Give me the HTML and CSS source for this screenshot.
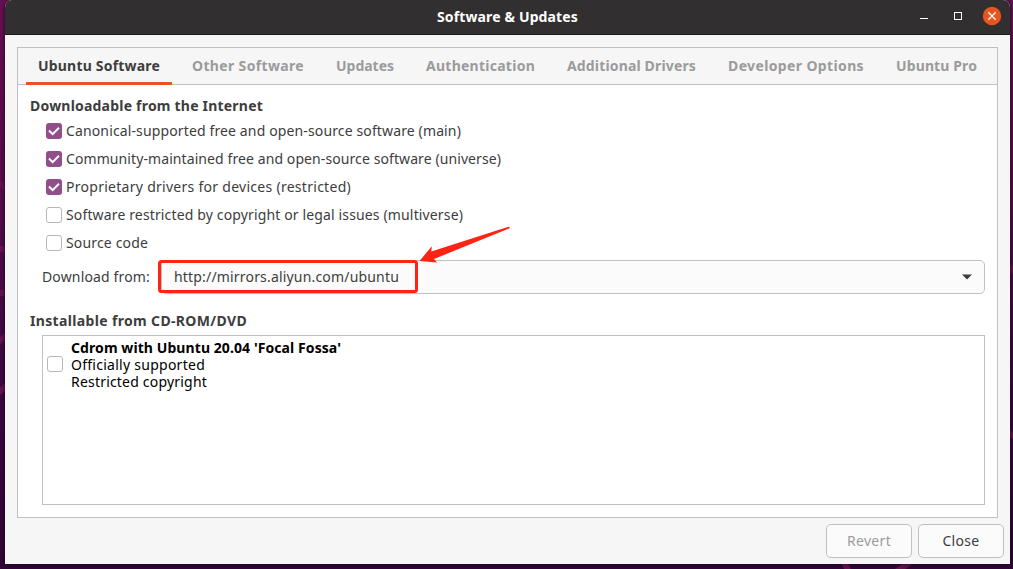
FILE: index.html
```
<!DOCTYPE html>
<html lang="en">
<head>
<meta charset="utf-8">
<title>Software &amp; Updates</title>
<link rel="stylesheet" href="styles.css">
</head>
<body>
<div class="desktop">
  <svg class="wallpaper" width="1013" height="569" viewBox="0 0 1013 569" fill="none" stroke="#641250" stroke-width="6">
    <path d="M-2 182 L6 188 M-2 249 H6 M-2 293 H6 M-2 342 L7 335 M-2 393 L6 386 M1007 265 L1015 272 M1007 432 L1015 437 M844 562 L850 574 M910 562 L896 572"/>
  </svg>
  <main class="window">
    <header class="titlebar">
      <h1 class="title">Software &amp; Updates</h1>
      <div class="controls">
        <svg width="90" height="34" viewBox="0 0 90 34">
          <path d="M0 18.500h8" stroke="#fff"/>
          <rect x="34.500" y="12.500" width="7" height="7" fill="none" stroke="#fff"/>
          <circle cx="72" cy="16" r="9.2" fill="#e95420"/>
          <path d="M68.300 12.300l7.400 7.400M75.700 12.300l-7.400 7.400" stroke="#fff" stroke-width="1.300"/>
        </svg>
      </div>
    </header>
    <section class="notebook">
      <nav class="tabs">
        <div class="tab active tab-ubuntu">Ubuntu Software</div>
        <div class="tab tab-other">Other Software</div>
        <div class="tab tab-updates">Updates</div>
        <div class="tab tab-auth">Authentication</div>
        <div class="tab tab-drivers">Additional Drivers</div>
        <div class="tab tab-developer">Developer Options</div>
        <div class="tab tab-pro">Ubuntu Pro</div>
      </nav>
      <div class="page">
        <h2 class="heading internet">Downloadable from the Internet</h2>
        <div class="options">
          <div class="option main"><span class="check on"><svg width="16" height="16" viewBox="0 0 16 16"><path d="M3 7.500l3.600 3.600 6.400-6.400"/></svg></span><span class="text">Canonical-supported free and open-source software (main)</span></div>
          <div class="option universe"><span class="check on"><svg width="16" height="16" viewBox="0 0 16 16"><path d="M3 7.500l3.600 3.600 6.400-6.400"/></svg></span><span class="text">Community-maintained free and open-source software (universe)</span></div>
          <div class="option restricted"><span class="check on"><svg width="16" height="16" viewBox="0 0 16 16"><path d="M3 7.500l3.600 3.600 6.400-6.400"/></svg></span><span class="text">Proprietary drivers for devices (restricted)</span></div>
          <div class="option multiverse"><span class="check"></span><span class="text">Software restricted by copyright or legal issues (multiverse)</span></div>
          <div class="option source"><span class="check"></span><span class="text">Source code</span></div>
        </div>
        <div class="download">
          <span class="label text">Download from:</span>
          <div class="combo">
            <span class="text url">http://mirrors.aliyun.com/ubuntu</span>
            <svg width="10" height="6" viewBox="0 0 10 6"><path d="M0 .5h10L5 5.500z" fill="#3d3d3d"/></svg>
          </div>
        </div>
        <h2 class="heading cd">Installable from CD-ROM/DVD</h2>
        <div class="list">
          <span class="check"></span>
          <div class="lines">
            <div class="line-name">Cdrom with Ubuntu 20.04 'Focal Fossa'</div>
            <div class="line-support">Officially supported</div>
            <div class="line-copyright">Restricted copyright</div>
          </div>
        </div>
      </div>
    </section>
    <footer class="actions">
      <div class="button disabled">Revert</div>
      <div class="button">Close</div>
    </footer>
  </main>
  <svg class="annotation" width="1013" height="569" viewBox="0 0 1013 569">
    <rect x="159.500" y="261.500" width="257" height="30" rx="2" fill="none" stroke="#ff2313" stroke-width="3"/>
    <path d="M419.500 261L431.800 246.300L431.300 251.500L508.500 226.700Q511 227 509 228.500L434 259L437 262.500Z" fill="#ff2313"/>
  </svg>
</div>
</body>
</html>
```
FILE: styles.css
```
* { box-sizing: border-box; }
body { margin: 0; font-family: "Noto Sans", sans-serif; font-size: 14px; color: #3d3d3d; }
h1, h2 { margin: 0; font-size: 14px; line-height: 20px; }
.desktop { position: relative; width: 1013px; height: 569px; padding: 0 3px 5px 5px; overflow: hidden; background: linear-gradient(#651052, #560b4c 35%, #3f0744 65%, #320539); }
.wallpaper { position: absolute; left: 0; top: 0; }
.window { position: relative; display: flex; flex-direction: column; height: 564px; background: #f6f6f6; border-radius: 7px 7px 0 0; box-shadow: 0 0 4px rgba(0,0,0,.7); overflow: hidden; white-space: nowrap; }
.titlebar { display: grid; grid-template-columns: 90px 1fr 90px; height: 35px; flex: none; background: #322f30; border-bottom: 1px solid #1c1a1b; color: #fff; }
.title { grid-column: 2; text-align: center; line-height: 33px; letter-spacing: .135px; }
.controls { height: 34px; }
.notebook { margin: 12px 12px 0; width: 981px; height: 471px; border: 1px solid #c0c0c0; background: #fff; flex: none; }
.tabs { display: flex; gap: 8px; height: 37px; padding-left: 8px; background: #f6f6f6; border-bottom: 1px solid #c0c0c0; }
.tab { height: 37px; padding: 0 12px; font-weight: 700; line-height: 36px; color: #9b9b9b; }
.tab.active { color: #3d3d3d; border-bottom: 3px solid #e95420; }
.tab-ubuntu { letter-spacing: .192px; }
.tab-other { letter-spacing: .345px; }
.tab-updates { letter-spacing: -.02px; }
.tab-auth { letter-spacing: .257px; }
.tab-drivers { letter-spacing: .155px; }
.tab-developer { letter-spacing: .367px; }
.tab-pro { letter-spacing: .113px; }
.page { padding: 11px 12px 0; }
.internet { letter-spacing: .208px; }
.options { padding: 1px 0 0 16px; }
.option { display: flex; align-items: center; gap: 4px; height: 28px; }
.main { letter-spacing: .132px; }
.universe { letter-spacing: .09px; }
.restricted { letter-spacing: .277px; }
.multiverse { letter-spacing: .142px; }
.source { letter-spacing: .158px; }
.text { padding-bottom: 2px; }
.check { width: 16px; height: 16px; flex: none; border: 1px solid #b8b8b8; border-radius: 3px; background: #fff; }
.check.on { border: 0; background: #924d8b; }
.check svg { display: block; fill: none; stroke: #fff; stroke-width: 2; }
.download { display: flex; align-items: center; margin: 3px 0 0 12px; height: 34px; }
.label { width: 119px; letter-spacing: .151px; }
.combo { display: flex; align-items: center; justify-content: space-between; width: 824px; height: 34px; padding: 0 12px; border: 1px solid #c0c0c0; border-radius: 5px; background: #fbfbfb; }
.url { letter-spacing: .179px; }
.cd { margin-top: 17px; letter-spacing: .345px; }
.list { display: flex; gap: 8px; margin: 4px 0 0 12px; width: 943px; height: 170px; padding: 3px 4px; border: 1px solid #c0c0c0; color: #000; }
.list .check { margin-top: 17px; }
.lines { line-height: 17px; }
.line-name { font-weight: 700; letter-spacing: .083px; }
.line-support { letter-spacing: .262px; }
.line-copyright { letter-spacing: .197px; }
.actions { display: flex; gap: 6px; justify-content: flex-end; padding: 6px 6px 0; }
.button { width: 86px; height: 34px; border: 1px solid #c0c0c0; border-radius: 5px; background: #fbfbfb; text-align: center; line-height: 32px; letter-spacing: .3px; }
.disabled { color: #9b9b9b; }
.annotation { position: absolute; left: 0; top: 0; }
```
